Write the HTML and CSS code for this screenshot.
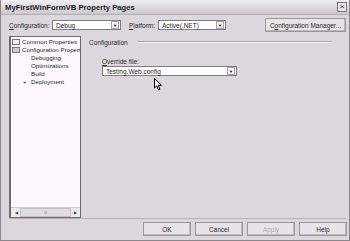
FILE: index.html
```html
<!DOCTYPE html>
<html lang="en">
<head>
    <meta charset="UTF-8">
    <title>MyFirstWinFormVB Property Pages</title>
    <link rel="stylesheet" href="styles.css">
</head>
<body>
    <div class="window">
        <div class="titlebar">
            <span class="title">MyFirstWinFormVB Property Pages</span>
            <span class="close">&#215;</span>
        </div>
        <div class="toolbar">
            <label class="lbl lbl-config"><u>C</u>onfiguration:</label>
            <div class="combo combo-config"><span>Debug</span><span class="arrow">&#9660;</span></div>
            <label class="lbl lbl-platform"><u>P</u>latform:</label>
            <div class="combo combo-platform"><span>Active(.NET)</span><span class="arrow">&#9660;</span></div>
            <button class="btn btn-manager">C<u>o</u>nfiguration Manager...</button>
        </div>
        <div class="main">
            <div class="tree">
                <ul class="tree-list">
                    <li><span class="folder"></span>Common Properties</li>
                    <li><span class="folder open"></span>Configuration Propertie</li>
                    <li class="child">Debugging</li>
                    <li class="child">Optimizations</li>
                    <li class="child">Build</li>
                    <li class="child"><span class="plus">+</span>Deployment</li>
                </ul>
                <div class="hscroll">
                    <span class="sarrow">&#9664;</span>
                    <span class="thumb"><span class="grip"></span></span>
                    <span class="sarrow">&#9654;</span>
                </div>
            </div>
            <div class="panel">
                <div class="group-title"><span>Configuration</span><span class="rule"></span></div>
                <div class="field">
                    <label class="lbl"><u>O</u>verride file:</label>
                    <div class="combo combo-file"><span>Testing.Web.config</span><span class="arrow">&#9660;</span></div>
                    <svg class="cursor" width="9" height="13" viewBox="0 0 9 13">
                        <path d="M0.5 0.5 L0.5 10 L2.8 7.8 L4.6 12 L6 11.4 L4.3 7.3 L7.5 7.3 Z" fill="#fff" stroke="#000" stroke-width="1"/>
                    </svg>
                </div>
            </div>
        </div>
        <div class="footer">
            <button class="btn">OK</button>
            <button class="btn">Cancel</button>
            <button class="btn disabled">Apply</button>
            <button class="btn">Help</button>
        </div>
    </div>
</body>
</html>
```
FILE: styles.css
```css
body {
    margin: 0;
    padding: 0;
    background-color: #dcd7dc;
    font-family: "Liberation Sans", Arial, sans-serif;
    font-size: 6.5px;
    color: #2a2a2a;
}
.window {
    width: 350px;
    height: 241px;
    box-sizing: border-box;
    border: 1px solid #8a868a;
    border-top: none;
    background-color: #dcd7dc;
    display: flex;
    flex-direction: column;
    overflow: hidden;
}
.titlebar {
    height: 14px;
    background: linear-gradient(to bottom, #f0eef0, #cdc8cd);
    display: flex;
    align-items: center;
    justify-content: space-between;
    padding: 0 2px 0 4px;
    border-bottom: 1px solid #b3aeb3;
}
.title {
    font-weight: bold;
    font-size: 7.7px;
    color: #1c1c1c;
}
.close {
    width: 8px;
    height: 8px;
    border: 1px solid #777;
    background-color: #e6e2e6;
    font-size: 8px;
    line-height: 8px;
    text-align: center;
    color: #333;
}
.toolbar {
    display: flex;
    align-items: center;
    height: 14px;
    margin: 3px 3px 0 8px;
}
.lbl-config {
    width: 43px;
}
.lbl-platform {
    width: 29px;
    margin-left: 8px;
}
.combo {
    height: 10px;
    background-color: #fff;
    border: 1px solid #7f7b7f;
    display: flex;
    align-items: center;
    justify-content: space-between;
    padding-left: 3px;
    box-sizing: border-box;
}
.combo .arrow {
    width: 8px;
    height: 8px;
    margin-right: 1px;
    border: 1px solid #a9a5a9;
    box-sizing: border-box;
    background-color: #f4f2f4;
    font-size: 4px;
    line-height: 7px;
    text-align: center;
    color: #000;
}
.combo-config {
    width: 69px;
}
.combo-platform {
    width: 68px;
}
.btn {
    font-family: "Liberation Sans", Arial, sans-serif;
    font-size: 6.5px;
    color: #2a2a2a;
    background-color: #e7e3e7;
    border: 1px solid #9a969a;
    box-shadow: inset -1px -1px 0 #bcb8bc;
    height: 14px;
    padding: 0;
}
.btn-manager {
    margin-left: auto;
    width: 81px;
}
.main {
    display: flex;
    height: 182px;
    margin: 4px 3px 0 8px;
    border-bottom: 1px solid #b5b1b5;
}
.tree {
    width: 72px;
    box-sizing: border-box;
    border: 1px solid #6e6a6e;
    border-left-width: 2px;
    background-color: #fdf8fd;
    display: flex;
    flex-direction: column;
    justify-content: space-between;
}
.tree-list {
    list-style: none;
    margin: 0;
    padding: 1px 0 0 1px;
    font-size: 6.2px;
}
.tree-list li {
    height: 8px;
    line-height: 8px;
    white-space: nowrap;
    overflow: hidden;
    display: flex;
    align-items: center;
}
.tree-list li.child {
    padding-left: 19px;
}
.folder {
    flex-shrink: 0;
    display: inline-block;
    width: 6px;
    height: 4px;
    border: 1px solid #777;
    background-color: #eee;
    margin-right: 2px;
}
.folder.open {
    background-color: #ccc;
}
.plus {
    margin-left: -8px;
    width: 8px;
}
.hscroll {
    height: 9px;
    display: flex;
    align-items: center;
    background-color: #ecebec;
    border-top: 1px solid #cfcacf;
    padding: 0 1px;
}
.sarrow {
    font-size: 4px;
    width: 8px;
    text-align: center;
    color: #444;
}
.thumb {
    flex: 1;
    height: 7px;
    background-color: #e0dde0;
    border: 1px solid #c4c0c4;
    display: flex;
    align-items: center;
    justify-content: center;
}
.grip {
    width: 3px;
    height: 3px;
    background-color: #c2bec2;
}
.panel {
    flex: 1;
    padding: 2px 0 0 8px;
}
.group-title {
    display: flex;
    align-items: center;
    height: 8px;
}
.group-title .rule {
    width: 195px;
    height: 0;
    border-top: 1px solid #aaa6aa;
    border-bottom: 1px solid #f4f2f4;
    margin-left: auto;
    margin-right: 14px;
}
.field {
    margin: 12px 0 0 13px;
    position: relative;
}
.field .lbl {
    display: block;
    height: 8px;
}
.combo-file {
    width: 135px;
}
.cursor {
    position: absolute;
    left: 52px;
    top: 20px;
}
.footer {
    display: flex;
    justify-content: flex-end;
    gap: 4px;
    margin: 3px 2px 0 0;
}
.footer .btn {
    width: 48px;
}
.btn.disabled {
    color: #b0acb0;
}
```
